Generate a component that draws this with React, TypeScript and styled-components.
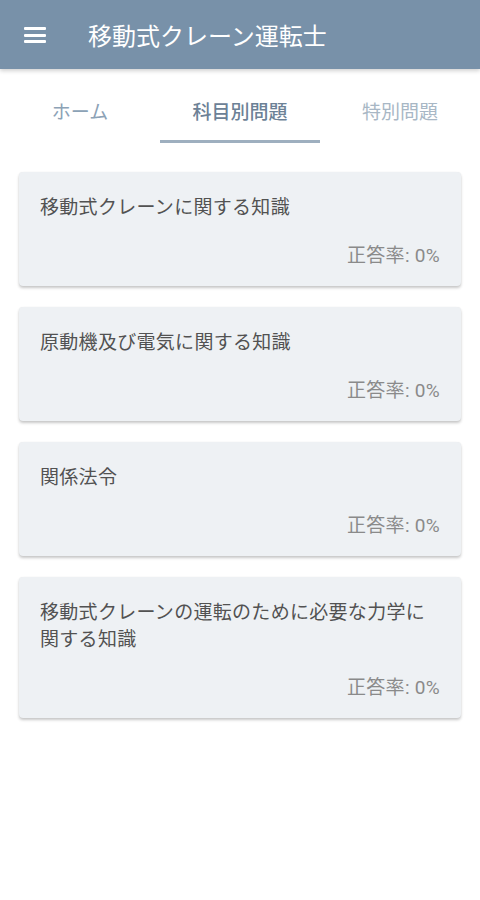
import React from "react";
import styled, { createGlobalStyle } from "styled-components";

const Global = createGlobalStyle`
  html, body { margin: 0; padding: 0; background: #ffffff; }
  body { font-family: Roboto, "Noto Sans CJK JP", sans-serif; }
`;

const Page = styled.div`
  width: 480px;
  min-height: 900px;
  background: #ffffff;
  display: flex;
  flex-direction: column;
`;

const AppBar = styled.header`
  height: 69px;
  background: #7891a9;
  display: flex;
  align-items: center;
  padding: 0 0 0 24px;
  box-shadow: 0 2px 4px rgba(0, 0, 0, 0.18);
  position: relative;
  z-index: 1;
`;

const MenuButton = styled.div`
  width: 22px;
  height: 16px;
  display: flex;
  flex-direction: column;
  justify-content: space-between;
  margin-right: 42px;
  margin-top: 1px;
`;

const MenuLine = styled.span`
  display: block;
  height: 3px;
  background: #ffffff;
  border-radius: 1px;
`;

const Title = styled.h1`
  margin: 0;
  color: #ffffff;
  font-family: Roboto, "Noto Sans CJK JP", sans-serif;
  font-size: 24px;
  font-weight: 400;
`;

const Tabs = styled.nav`
  display: grid;
  grid-template-columns: repeat(3, 160px);
  height: 74px;
`;

const Tab = styled.div<{ $active?: boolean; $tone: string }>`
  display: flex;
  align-items: center;
  justify-content: center;
  padding-top: 12px;
  font-size: 19px;
  font-weight: ${(p) => (p.$active ? 500 : 400)};
  color: ${(p) => p.$tone};
  border-bottom: 3px solid ${(p) => (p.$active ? "#9eafbf" : "transparent")};
  box-sizing: border-box;
`;

const List = styled.main`
  display: flex;
  flex-direction: column;
  gap: 21px;
  padding: 29px 19px 0 19px;
`;

const Card = styled.section`
  background: #eef1f4;
  border-radius: 4px;
  box-shadow: 0 2px 3px rgba(0, 0, 0, 0.22), 0 0 1px rgba(0, 0, 0, 0.08);
  padding: 22px 21px 18px 21px;
  display: flex;
  flex-direction: column;
  gap: 23px;
`;

const CardTitle = styled.div`
  font-size: 19px;
  line-height: 27px;
  letter-spacing: 0.3px;
  color: #525252;
  font-weight: 400;
`;

const Rate = styled.div`
  align-self: flex-end;
  font-size: 19px;
  line-height: 24px;
  letter-spacing: 0.3px;
  color: #8a8a8a;
`;

const subjects = [
  "移動式クレーンに関する知識",
  "原動機及び電気に関する知識",
  "関係法令",
  "移動式クレーンの運転のために必要な力学に関する知識",
];

export default function App() {
  return (
    <Page>
      <Global />
      <AppBar>
        <MenuButton>
          <MenuLine />
          <MenuLine />
          <MenuLine />
        </MenuButton>
        <Title>移動式クレーン運転士</Title>
      </AppBar>
      <Tabs>
        <Tab $tone="#8ca2b6">ホーム</Tab>
        <Tab $active $tone="#6c8196">科目別問題</Tab>
        <Tab $tone="#a8b7c5">特別問題</Tab>
      </Tabs>
      <List>
        {subjects.map((s) => (
          <Card key={s}>
            <CardTitle>{s}</CardTitle>
            <Rate>正答率: 0%</Rate>
          </Card>
        ))}
      </List>
    </Page>
  );
}
